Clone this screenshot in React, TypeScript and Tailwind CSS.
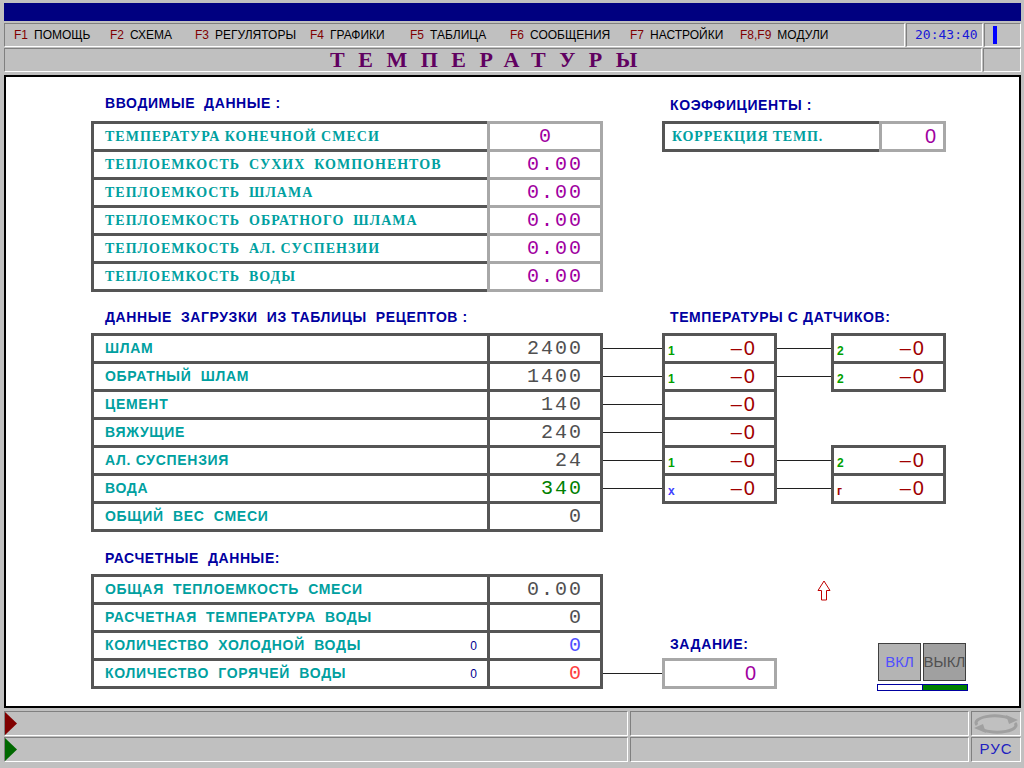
import React from 'react';

const BEVEL =
  "border border-t-[#808080] border-l-[#808080] border-r-[#ffffff] border-b-[#ffffff]";
const HEADER =
  "h-[16px] leading-[16px] text-[14px] font-bold text-[#0000a0] whitespace-pre tracking-[0.6px] font-['Liberation_Sans',Arial,sans-serif]";
const SERIF_LABEL =
  "pl-[11px] font-['Liberation_Serif','Times_New_Roman',serif] font-bold text-[14px] tracking-[1px] text-[#00a0a0] whitespace-pre";
const SANS_LABEL =
  "pl-[11px] font-['Liberation_Sans',Arial,sans-serif] font-bold text-[14px] tracking-[0.7px] text-[#00a0a0] whitespace-pre";
const MONO_VAL =
  "w-full text-right pr-[17px] font-['Liberation_Mono','Courier_New',monospace] text-[20px] tracking-[2px] leading-[25px]";
const SENSOR_VAL =
  "font-['Liberation_Sans',Arial,sans-serif] text-[20px] leading-[25px] tracking-[2px] text-[#a00000]";

type Row = { label: React.ReactNode; value: React.ReactNode };

function Table({
  rows,
  labelW,
  valueW,
  labelBg,
  valueBg,
}: {
  rows: Row[];
  labelW: string;
  valueW: string;
  labelBg: string;
  valueBg: string;
}) {
  return (
    <div className="flex">
      <div className={`flex flex-col gap-[3px] p-[3px] pr-0 ${labelBg} ${labelW}`}>
        {rows.map((r, i) => (
          <div key={i} className="h-[25px] bg-white flex items-center">
            {r.label}
          </div>
        ))}
      </div>
      <div className={`flex flex-col gap-[3px] p-[3px] ${valueBg} ${valueW}`}>
        {rows.map((r, i) => (
          <div key={i} className="h-[25px] bg-white flex items-center">
            {r.value}
          </div>
        ))}
      </div>
    </div>
  );
}

function Connectors({ width, lines }: { width: string; lines: boolean[] }) {
  return (
    <div className={`flex flex-col gap-[3px] pt-[3px] ${width}`}>
      {lines.map((l, i) => (
        <div key={i} className="h-[25px] flex items-center">
          {l && <div className="h-px w-full bg-[#202020]" />}
        </div>
      ))}
    </div>
  );
}

type SRow = { l: string; c?: string };

function SensorTable({ rows }: { rows: SRow[] }) {
  return (
    <div className="w-[115px] flex flex-col gap-[3px] p-[3px] bg-[#555555]">
      {rows.map((r, i) => (
        <div
          key={i}
          className="h-[25px] bg-white flex items-baseline justify-between pl-[3px] pr-[17px]"
        >
          <span
            className={`text-[12px] font-bold leading-none font-['Liberation_Sans',Arial,sans-serif] ${r.c ?? 'text-[#00a000]'}`}
          >
            {r.l}
          </span>
          <span className={SENSOR_VAL}>–0</span>
        </div>
      ))}
    </div>
  );
}

const menu: [string, string, string][] = [
  ['F1', 'ПОМОЩЬ', 'w-[96px]'],
  ['F2', 'СХЕМА', 'w-[85px]'],
  ['F3', 'РЕГУЛЯТОРЫ', 'w-[115px]'],
  ['F4', 'ГРАФИКИ', 'w-[100px]'],
  ['F5', 'ТАБЛИЦА', 'w-[100px]'],
  ['F6', 'СООБЩЕНИЯ', 'w-[120px]'],
  ['F7', 'НАСТРОЙКИ', 'w-[110px]'],
  ['F8,F9', 'МОДУЛИ', 'w-[100px]'],
];

export default function App() {
  const magenta = 'text-[#a000a0]';
  const gray = 'text-[#505050]';

  const table1: Row[] = [
    {
      label: <span className={SERIF_LABEL}>ТЕМПЕРАТУРА КОНЕЧНОЙ СМЕСИ</span>,
      value: (
        <span className={`w-full text-center font-['Liberation_Mono','Courier_New',monospace] text-[20px] leading-[25px] ${magenta}`}>
          0
        </span>
      ),
    },
    ...[
      'ТЕПЛОЕМКОСТЬ  СУХИХ  КОМПОНЕНТОВ',
      'ТЕПЛОЕМКОСТЬ  ШЛАМА',
      'ТЕПЛОЕМКОСТЬ  ОБРАТНОГО  ШЛАМА',
      'ТЕПЛОЕМКОСТЬ  АЛ. СУСПЕНЗИИ',
      'ТЕПЛОЕМКОСТЬ  ВОДЫ',
    ].map((t) => ({
      label: <span className={SERIF_LABEL}>{t}</span>,
      value: <span className={`${MONO_VAL} ${magenta}`}>0.00</span>,
    })),
  ];

  const table2: Row[] = [
    ['ШЛАМ', '2400', gray],
    ['ОБРАТНЫЙ  ШЛАМ', '1400', gray],
    ['ЦЕМЕНТ', '140', gray],
    ['ВЯЖУЩИЕ', '240', gray],
    ['АЛ. СУСПЕНЗИЯ', '24', gray],
    ['ВОДА', '340', 'text-[#008000]'],
    ['ОБЩИЙ  ВЕС  СМЕСИ', '0', gray],
  ].map(([l, v, c]) => ({
    label: <span className={SANS_LABEL}>{l}</span>,
    value: <span className={`${MONO_VAL} ${c}`}>{v}</span>,
  }));

  const table3: Row[] = [
    ['ОБЩАЯ  ТЕПЛОЕМКОСТЬ  СМЕСИ', '0.00', gray, false],
    ['РАСЧЕТНАЯ  ТЕМПЕРАТУРА  ВОДЫ', '0', gray, false],
    ['КОЛИЧЕСТВО  ХОЛОДНОЙ  ВОДЫ', '0', 'text-[#5050ff]', true],
    ['КОЛИЧЕСТВО  ГОРЯЧЕЙ  ВОДЫ', '0', 'text-[#ff4040]', true],
  ].map(([l, v, c, small]) => ({
    label: (
      <div className="w-full flex items-center justify-between pr-[10px]">
        <span className={SANS_LABEL}>{l as string}</span>
        {small && (
          <span className="text-[12px] text-[#000090] font-['Liberation_Sans',Arial,sans-serif]">0</span>
        )}
      </div>
    ),
    value: <span className={`${MONO_VAL} ${c as string}`}>{v as string}</span>,
  }));

  return (
    <div className="w-[1024px] h-[768px] bg-[#c0c0c0] pt-[3px] pl-[4px] pr-[3px] flex flex-col overflow-hidden font-['Liberation_Sans',Arial,sans-serif]">
      {/* title bar */}
      <div className="h-[18px] bg-[#000080]" />

      {/* menu row */}
      <div className="mt-[2px] h-[24px] flex gap-[1px]">
        <div className={`w-[901px] ${BEVEL} flex items-center pl-[9px] text-[12px]`}>
          {menu.map(([k, n, w]) => (
            <div key={k} className={`flex items-center gap-[6px] ${w}`}>
              <span className="text-[#800000]">{k}</span>
              <span className="text-black">{n}</span>
            </div>
          ))}
        </div>
        <div className={`w-[77px] ${BEVEL} flex items-center pl-[8px]`}>
          <span className="font-['DejaVu_Sans_Mono',monospace] text-[13px] text-[#1818d8]">
            20:43:40
          </span>
        </div>
        <div className={`flex-1 ${BEVEL} flex items-center pl-[8px]`}>
          <div className="w-[4px] h-[18px] bg-[#0000ff]" />
        </div>
      </div>

      {/* page title row */}
      <div className="mt-[1px] h-[24px] flex gap-[1px]">
        <div className={`w-[978px] ${BEVEL} flex items-center justify-center pr-[5px]`}>
          <span className="font-['Liberation_Serif','Times_New_Roman',serif] font-bold text-[22px] leading-none tracking-[13.5px] text-[#600060]">
            ТЕМПЕРАТУРЫ
          </span>
        </div>
        <div className={`flex-1 ${BEVEL}`} />
      </div>

      {/* main panel */}
      <div className="mt-[3px] h-[633px] bg-white border-2 border-black pl-[85px] pt-[18px] flex flex-col">
        {/* band 1 */}
        <div className="flex">
          <div className={`w-[571px] pl-[14px] ${HEADER}`}>ВВОДИМЫЕ  ДАННЫЕ :</div>
          <div className={`pl-[8px] mt-[2px] ${HEADER}`}>КОЭФФИЦИЕНТЫ :</div>
        </div>
        <div className="mt-[8px] flex items-start">
          <Table
            rows={table1}
            labelW="w-[396px]"
            valueW="w-[116px]"
            labelBg="bg-[#555555]"
            valueBg="bg-[#a8a8a8]"
          />
          <div className="w-[59px]" />
          <Table
            rows={[
              {
                label: (
                  <span className="pl-[7px] font-['Liberation_Serif','Times_New_Roman',serif] font-bold text-[14px] tracking-[0.8px] text-[#00a0a0]">
                    КОРРЕКЦИЯ ТЕМП.
                  </span>
                ),
                value: (
                  <span className="w-full text-right pr-[7px] font-['Liberation_Sans',Arial,sans-serif] text-[20px] leading-[25px] text-[#a000a0]">
                    0
                  </span>
                ),
              },
            ]}
            labelW="w-[217px]"
            valueW="w-[67px]"
            labelBg="bg-[#555555]"
            valueBg="bg-[#a8a8a8]"
          />
        </div>

        {/* band 2 */}
        <div className="mt-[17px] flex">
          <div className={`w-[571px] pl-[14px] ${HEADER}`}>ДАННЫЕ  ЗАГРУЗКИ  ИЗ ТАБЛИЦЫ  РЕЦЕПТОВ :</div>
          <div className={`pl-[8px] ${HEADER}`}>ТЕМПЕРАТУРЫ С ДАТЧИКОВ:</div>
        </div>
        <div className="mt-[8px] flex items-start">
          <Table
            rows={table2}
            labelW="w-[396px]"
            valueW="w-[116px]"
            labelBg="bg-[#555555]"
            valueBg="bg-[#555555]"
          />
          <Connectors width="w-[59px]" lines={[true, true, true, true, true, true, false]} />
          <SensorTable
            rows={[
              { l: '1' },
              { l: '1' },
              { l: '' },
              { l: '' },
              { l: '1' },
              { l: 'x', c: 'text-[#4040ff]' },
            ]}
          />
          <Connectors width="w-[54px]" lines={[true, true, false, false, true, true]} />
          <div className="flex flex-col gap-[53px]">
            <SensorTable rows={[{ l: '2' }, { l: '2' }]} />
            <SensorTable rows={[{ l: '2' }, { l: 'г', c: 'text-[#a00000]' }]} />
          </div>
        </div>

        {/* band 3 */}
        <div className="mt-[18px] flex">
          <div className={`w-[571px] pl-[14px] ${HEADER}`}>РАСЧЕТНЫЕ  ДАННЫЕ:</div>
        </div>
        <div className="mt-[8px] flex items-start">
          <Table
            rows={table3}
            labelW="w-[396px]"
            valueW="w-[116px]"
            labelBg="bg-[#555555]"
            valueBg="bg-[#555555]"
          />
          <Connectors width="w-[59px]" lines={[false, false, false, true]} />
          <div className="flex flex-col">
            <div className="ml-[155px] mt-[6px] h-[21px]">
              <svg width="14" height="21" viewBox="0 0 14 21">
                <path
                  d="M7 1 L13 10.5 L9.5 10.5 L9.5 20 L4.5 20 L4.5 10.5 L1 10.5 Z"
                  fill="none"
                  stroke="#c00000"
                  strokeWidth="1"
                />
              </svg>
            </div>
            <div className="mt-[35px] flex items-start">
              <div className="w-[115px] flex flex-col">
                <div className={`pl-[8px] ${HEADER}`}>ЗАДАНИЕ:</div>
                <div className="mt-[6px] p-[3px] bg-[#a8a8a8]">
                  <div className="h-[25px] bg-white flex items-center justify-end pr-[18px]">
                    <span className="font-['Liberation_Sans',Arial,sans-serif] text-[20px] leading-[25px] text-[#a000a0]">
                      0
                    </span>
                  </div>
                </div>
              </div>
              <div className="ml-[100px] mt-[7px] flex flex-col">
                <div className="flex gap-[2px] pl-[1px]">
                  <div className="w-[43px] h-[38px] bg-[#b4b4b4] border border-[#404040] flex items-center justify-center text-[15px] text-[#5050ff]">
                    ВКЛ
                  </div>
                  <div className="w-[43px] h-[38px] bg-[#a0a0a0] border border-[#404040] flex items-center justify-center text-[15px] text-[#505050]">
                    ВЫКЛ
                  </div>
                </div>
                <div className="mt-[3px] w-[91px] h-[7px] border border-[#0000a0] flex">
                  <div className="w-[44px] bg-white" />
                  <div className="flex-1 bg-[#008000] border-l border-[#0000a0]" />
                </div>
              </div>
            </div>
          </div>
        </div>
      </div>

      {/* status rows */}
      <div className="mt-[3px] flex flex-col gap-[1px]">
        {['#800000', '#006800'].map((col, i) => (
          <div key={col} className="h-[25px] flex gap-[2px]">
            <div className={`w-[624px] ${BEVEL} flex items-center`}>
              <svg width="12" height="23" viewBox="0 0 12 23">
                <polygon points="0,0 12,11.5 0,23" fill={col} />
              </svg>
            </div>
            <div className={`w-[339px] ${BEVEL}`} />
            <div className={`flex-1 ${BEVEL} flex items-center justify-center`}>
              {i === 0 ? (
                <svg width="46" height="20" viewBox="0 0 46 20">
                  <g fill="none" stroke="#a0a0a0" strokeWidth="3">
                    <path d="M4 11 A19 7 0 0 1 37 4.5" />
                    <path d="M42 9 A19 7 0 0 1 9 15.5" />
                  </g>
                  <polygon points="33,1 45,6 36,10" fill="#a0a0a0" />
                  <polygon points="13,19 1,14 10,10" fill="#a0a0a0" />
                </svg>
              ) : (
                <span className="text-[15px] text-[#2020c0] tracking-[1px]">РУС</span>
              )}
            </div>
          </div>
        ))}
      </div>
    </div>
  );
}
